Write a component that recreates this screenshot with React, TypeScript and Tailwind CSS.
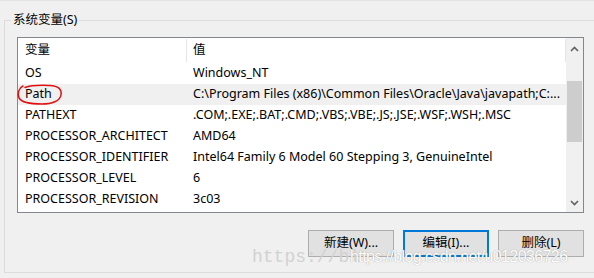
const ROWS = [
  { name: "OS", value: "Windows_NT" },
  { name: "Path", value: "C:\\Program Files (x86)\\Common Files\\Oracle\\Java\\javapath;C:...", selected: true },
  { name: "PATHEXT", value: ".COM;.EXE;.BAT;.CMD;.VBS;.VBE;.JS;.JSE;.WSF;.WSH;.MSC" },
  { name: "PROCESSOR_ARCHITECT", value: "AMD64" },
  { name: "PROCESSOR_IDENTIFIER", value: "Intel64 Family 6 Model 60 Stepping 3, GenuineIntel" },
  { name: "PROCESSOR_LEVEL", value: "6" },
  { name: "PROCESSOR_REVISION", value: "3c03" },
];

const FONT = "font-['Segoe_UI','Noto_Sans','Noto_Sans_CJK_SC',sans-serif]";

export default function App() {
  return (
    <div className={`relative w-[594px] h-[278px] overflow-hidden bg-[#f0f0f0] text-[12.5px] text-black ${FONT}`}>
      <div className="h-[1px] bg-[#e3e3e3]" />
      <div className="pt-[11px] pl-[4px]">
        <fieldset className="w-[620px] h-[261px] border border-[#dcdcdc]">
          <legend className="ml-[6px] px-[2px] leading-[16px]">系统变量(S)</legend>

          {/* variable list */}
          <div className="ml-[12px] mt-[9px] w-[567px] h-[176px] border border-[#828790] bg-white flex">
            <div className="flex-1 flex flex-col overflow-hidden">
              <div className="h-[25px] flex items-center">
                <div className="w-[168px] pl-[7px]">变量</div>
                <div className="w-[1px] h-[23px] bg-[#e5e5e5]" />
                <div className="flex-1 pl-[6px]">值</div>
                <div className="w-[1px] h-[23px] bg-[#e5e5e5]" />
              </div>
              {ROWS.map((row) => (
                <div
                  key={row.name}
                  className={`h-[21px] flex items-center whitespace-nowrap ${row.selected ? "bg-[#f0f0f0]" : ""}`}
                >
                  <div className="w-[169px] shrink-0 pl-[7px]">{row.name}</div>
                  <div className="pl-[6px]">{row.value}</div>
                </div>
              ))}
            </div>

            {/* scrollbar */}
            <div className="w-[17px] bg-[#f0f0f0] flex flex-col">
              <div className="h-[17px] flex items-center justify-center mt-[2px]">
                <svg width="9" height="6" viewBox="0 0 9 6">
                  <path d="M1 5 L4.5 1.5 L8 5" fill="none" stroke="#606060" strokeWidth="1.6" />
                </svg>
              </div>
              <div className="mt-[24px] mx-[1px] h-[61px] bg-[#cdcdcd]" />
              <div className="flex-1" />
              <div className="h-[17px] flex items-center justify-center mb-[1px]">
                <svg width="9" height="6" viewBox="0 0 9 6">
                  <path d="M1 1 L4.5 4.5 L8 1" fill="none" stroke="#606060" strokeWidth="1.6" />
                </svg>
              </div>
            </div>
          </div>

          {/* buttons */}
          <div className="w-[579px] mt-[17px] flex justify-end gap-[9px]">
            <button className="w-[86px] h-[27px] bg-[#e1e1e1] border border-[#adadad]">新建(W)...</button>
            <button className="w-[86px] h-[27px] bg-[#e1e1e1] border-2 border-[#0078d7]">编辑(I)...</button>
            <button className="w-[86px] h-[27px] bg-[#e1e1e1] border border-[#adadad]">删除(L)</button>
          </div>
        </fieldset>
      </div>

      {/* red marker around Path */}
      <svg className="absolute left-[16px] top-[83px]" width="48" height="23" viewBox="0 0 48 23">
        <path
          d="M7 3 C3 5 1 10 3 15 C6 20 16 21 26 21 C36 21 44 18 45 12 C46 6 42 3 34 2.5 C24 2 14 2.5 9 4.5"
          fill="none"
          stroke="#e01010"
          strokeWidth="1.5"
          strokeLinecap="round"
        />
      </svg>

      {/* watermark */}
      <div className="absolute left-[252px] top-[244px] font-['Liberation_Mono',monospace] text-[18px] text-[#d2d2d2] whitespace-nowrap pointer-events-none">
        https://bl
      </div>
      <div className="absolute left-[350px] top-[245px] font-['Liberation_Sans',sans-serif] text-[16px] tracking-[-0.6px] text-white whitespace-nowrap pointer-events-none [text-shadow:0_0_1px_#8a8a8a]">
        https://blog.csdn.net/u012036726
      </div>
    </div>
  );
}
